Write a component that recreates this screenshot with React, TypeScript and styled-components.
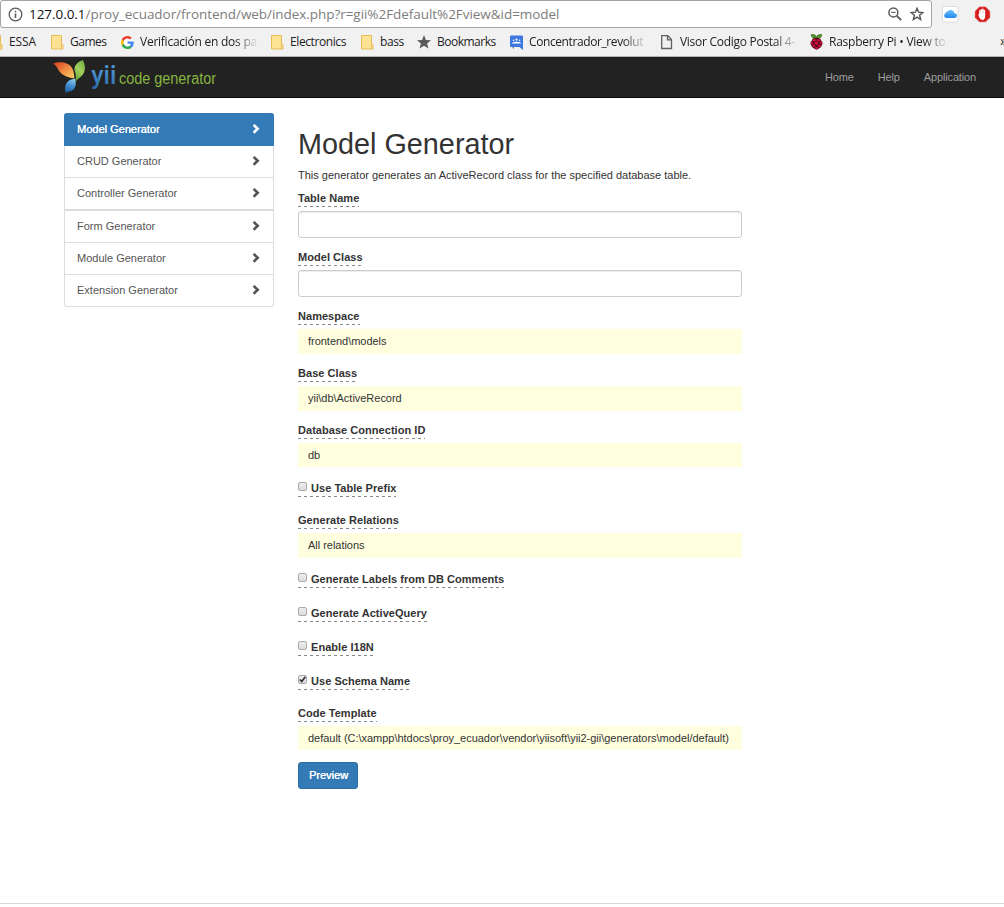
import React from 'react';
import styled, { createGlobalStyle, css } from 'styled-components';

const GlobalStyle = createGlobalStyle`
  * { box-sizing: border-box; }
  body { margin: 0; background: #fff; overflow: hidden; }
  h1, p { margin: 0; font-weight: normal; }
`;

const Page = styled.div`
  width: 1004px;
  height: 907px;
  display: flex;
  flex-direction: column;
  overflow: hidden;
  font: 11px/15px "Liberation Sans", Arial, sans-serif;
  color: #333;
`;

/* Browser chrome */
const Browser = styled.div`
  height: 57px;
  flex: none;
  background: #f2f1f2;
  border-bottom: 1px solid #b6b4b6;
  font-family: "Open Sans", "Noto Sans", sans-serif;
`;
const AddressRow = styled.div`
  display: flex;
  height: 28px;
`;
const AddressBar = styled.div`
  width: 932px;
  height: 28px;
  display: flex;
  align-items: center;
  padding: 0 7px;
  background: #fff;
  border: 1px solid #a6a5a6;
  border-radius: 3px;
`;
const Url = styled.div`
  flex: 1;
  margin-left: 6px;
  font-size: 13.5px;
  line-height: 20px;
  letter-spacing: -0.05px;
  color: #7d7d7d;
  white-space: nowrap;
`;
const Host = styled.span`
  color: #111;
`;
const BarIcons = styled.div`
  display: flex;
  align-items: center;
  gap: 8px;
`;
const Extensions = styled.div`
  display: flex;
  align-items: center;
  gap: 15px;
  padding-left: 10px;
`;
const Bookmarks = styled.div`
  display: flex;
  align-items: center;
  height: 28px;
  margin-left: -10px;
`;
const BookmarkItem = styled.div<{ $w: number }>`
  flex: none;
  width: ${p => p.$w}px;
  display: flex;
  align-items: center;
  gap: 6px;
  svg { flex: none; }
`;
const BookmarkText = styled.div<{ $fade?: boolean; $ls?: number }>`
  font-size: 12px;
  line-height: 18px;
  color: #222;
  white-space: nowrap;
  letter-spacing: ${p => p.$ls ?? -0.25}px;
  ${p => p.$fade && css`
    width: 119px;
    mask-image: linear-gradient(to right, #000 94px, rgba(0, 0, 0, 0.08) 117px);
  `}
`;
const More = styled.div`
  margin: -3px 0 0 0;
  font-size: 14px;
  line-height: 18px;
  color: #333;
`;

/* Site header */
const Navbar = styled.nav`
  flex: none;
  height: 41px;
  display: flex;
  justify-content: space-between;
  background: #222;
  border-bottom: 1px solid #080808;
  padding: 0 28px 0 50px;
`;
const NavLinks = styled.div`
  display: flex;
  gap: 24px;
  padding-top: 13px;
`;
const NavLink = styled.span`
  color: #9d9d9d;
  letter-spacing: -0.15px;
`;

/* Body */
const Main = styled.div`
  height: 806px;
  display: flex;
  gap: 24px;
  padding: 15px 0 0 64px;
  border-bottom: 1px solid #d9d9d9;
`;
const Sidebar = styled.div`
  width: 210px;
`;
const SideItem = styled.div<{ $active?: boolean; $thick?: boolean }>`
  display: flex;
  align-items: center;
  justify-content: space-between;
  height: ${p => (p.$active || p.$thick ? 33 : 32)}px;
  padding: 0 13px 0 12px;
  border: 1px solid #ddd;
  border-top: 0;
  border-bottom-width: ${p => (p.$thick ? 2 : 1)}px;
  color: #555;
  svg { margin-top: -1px; }
  &:last-child { border-radius: 0 0 3px 3px; }
  ${p => p.$active && css`
    background: #337ab7;
    border-color: #337ab7;
    color: #fff;
    border-radius: 3px 3px 0 0;
    text-shadow: 0.3px 0 #fff;
  `}
`;
const Content = styled.div`
  width: 444px;
`;
const Title = styled.h1`
  margin-top: 15px;
  font-size: 28.8px;
  line-height: 32px;
`;
const Intro = styled.p`
  margin: 7px 0 8px;
  line-height: 16px;
  white-space: nowrap;
`;
const Field = styled.div<{ $gap: number }>`
  display: flex;
  flex-direction: column;
  align-items: flex-start;
  gap: 4px;
  margin-bottom: ${p => p.$gap}px;
`;
const Label = styled.label`
  height: 16px;
  display: flex;
  font-weight: bold;
  letter-spacing: 0.04px;
  white-space: nowrap;
  background: repeating-linear-gradient(to right, #888 0 3px, transparent 3px 6px) 0 15px / 100% 1px no-repeat;
`;
const Input = styled.input`
  width: 100%;
  height: 27px;
  border: 1px solid #ccc;
  border-radius: 3px;
  box-shadow: inset 0 1px 1px rgba(0, 0, 0, 0.075);
  outline: none;
`;
const Sticky = styled.div<{ $h?: number }>`
  width: 100%;
  height: ${p => p.$h ?? 25}px;
  padding: 5px 10px;
  background: #ffffe0;
  letter-spacing: -0.025px;
  white-space: nowrap;
`;
const Check = styled.span`
  width: 9px;
  height: 9px;
  margin: 1px 4px 0 0;
  border: 1px solid #aaa;
  border-radius: 2px;
  background: linear-gradient(#ededed, #dcdcdc);
  display: flex;
  svg { overflow: visible; }
`;
const PreviewButton = styled.button`
  display: block;
  width: 60px;
  height: 27px;
  padding: 0 0 1px 1px;
  border: 1px solid #2e6da4;
  border-radius: 3px;
  background: #337ab7;
  color: #fff;
  font: 11px "Liberation Sans", Arial, sans-serif;
  text-shadow: 0.3px 0 #fff;
`;

const InfoIcon = () => (
  <svg width="15" height="15" viewBox="0 0 15 15">
    <circle cx="7.5" cy="7.5" r="6.3" fill="none" stroke="#5a5a5a" strokeWidth="1.3" />
    <path d="M7.5 6.5V11M7.5 3.7V5.2" stroke="#5a5a5a" strokeWidth="1.6" />
  </svg>
);
const ZoomOutIcon = () => (
  <svg width="14" height="14" viewBox="0 0 14 14" fill="none" stroke="#5a5a5a" strokeWidth="1.5">
    <circle cx="5.4" cy="5.4" r="4.5" />
    <path d="M8.8 8.8L13.2 13.2" strokeWidth="1.9" />
    <path d="M3.2 5.4H7.6" strokeWidth="1.1" />
  </svg>
);
const StarOutline = () => (
  <svg width="14" height="14" viewBox="0 0 14 14">
    <path d="M7 1.3L8.6 5.2L12.9 5.5L9.6 8.2L10.7 12.5L7 10.1L3.3 12.5L4.4 8.2L1.1 5.5L5.4 5.2Z" fill="none" stroke="#555" strokeWidth="1.4" />
  </svg>
);
const CloudIcon = () => (
  <svg width="17" height="17" viewBox="0 0 17 17">
    <defs>
      <linearGradient id="cloud" x1="0" y1="0" x2="0" y2="1">
        <stop offset="0" stopColor="#6ec3fa" />
        <stop offset="1" stopColor="#2386ee" />
      </linearGradient>
    </defs>
    <rect x="0.5" y="0.5" width="15.5" height="15.5" rx="2" fill="#fff" stroke="#dcdcdc" />
    <path d="M4.3 12A2.6 2.6 0 0 1 3.4 7.2A2.1 2.1 0 0 1 5.5 5.4A3.8 3.8 0 0 1 12.4 7.2A2.4 2.4 0 0 1 12.7 12Z" fill="url(#cloud)" />
  </svg>
);
const BlockIcon = () => (
  <svg width="17" height="17" viewBox="0 0 17 17">
    <path d="M5.4 0.8H11.6L16 5.2V11.6L11.6 16H5.4L1 11.6V5.2Z" fill="#d6201f" stroke="#e98d8b" strokeWidth="0.6" />
    <path d="M5.900 8.500V4.700M7.400 8V3.600M8.900 8V3.200M10.400 9V4.400" stroke="#fff" strokeWidth="1.400" strokeLinecap="round" />
    <path d="M4.200 8.600Q4.800 8 5.300 8.800L5.500 7.200H11.100V10.800Q10.900 13.800 8.500 14Q6.300 13.700 5.300 11.400Z" fill="#fff" />
  </svg>
);
const FolderIcon = () => (
  <svg width="13" height="15" viewBox="0 0 13 15">
    <path d="M0.5 0.5H10.5V9.5H12V14H0.5Z" fill="#fde293" stroke="#e6bd58" />
    <path d="M10.3 9.5V14" stroke="#eac66a" />
  </svg>
);
const GoogleIcon = () => (
  <svg width="13" height="13" viewBox="0 0 48 48">
    <circle cx="24" cy="24" r="24" fill="#fff" />
    <path fill="#EA4335" d="M24 9.5c3.5 0 6.700 1.200 9.200 3.600l6.900-6.900C35.900 2.400 30.500 0 24 0 14.600 0 6.500 5.400 2.600 13.200l8 6.200C12.400 13.700 17.700 9.500 24 9.500z" />
    <path fill="#4285F4" d="M47 24.600c0-1.600-.2-3.100-.4-4.600H24v9h12.900c-.6 3-2.300 5.500-4.800 7.200l7.700 6C44.400 38 47 31.800 47 24.600z" />
    <path fill="#FBBC05" d="M10.500 28.600c-.5-1.500-.8-3-.8-4.600s.3-3.100.8-4.600l-8-6.200C.9 16.500 0 20.100 0 24s.9 7.500 2.600 10.800z" />
    <path fill="#34A853" d="M24 48c6.500 0 11.900-2.100 15.900-5.800l-7.700-6c-2.200 1.400-4.900 2.300-8.200 2.300-6.300 0-11.600-4.200-13.500-9.900l-8 6.200C6.500 42.600 14.600 48 24 48z" />
  </svg>
);
const StarIcon = () => (
  <svg width="14" height="14" viewBox="0 0 14 14">
    <path d="M7 0L8.9 4.900L14 5.200L10.100 8.500L11.400 13.600L7 10.800L2.600 13.600L3.900 8.500L0 5.200L5.100 4.900Z" fill="#5a5a5a" />
  </svg>
);
const GroupIcon = () => (
  <svg width="13" height="15" viewBox="0 0 13 15">
    <path d="M1 0.500H12Q13 0.500 13 1.500V15L9.500 12H1Q0 12 0 11V1.500Q0 0.500 1 0.500Z" fill="#3d78e0" />
    <path d="M2 12L4 14.500V12Z" fill="#8a8f99" />
    <g fill="#fff">
      <circle cx="6.500" cy="4.500" r="1.100" />
      <circle cx="3.500" cy="5.300" r="0.800" />
      <circle cx="9.500" cy="5.300" r="0.800" />
      <path d="M2 8.600Q2.200 6.900 3.700 6.900Q4.300 6.900 4.600 7.200Q5.300 6.500 6.500 6.500T8.400 7.200Q8.700 6.900 9.300 6.900Q10.800 6.900 11 8.600Z" />
    </g>
  </svg>
);
const FileIcon = () => (
  <svg width="13" height="15" viewBox="0 0 13 15" fill="none" stroke="#606060" strokeWidth="1.300">
    <path d="M0.700 0.700H6.800L10.500 4.500V13.500H0.700Z" />
    <path d="M6.500 0.700V4.800H10.500" />
  </svg>
);
const RaspberryIcon = () => (
  <svg width="13" height="16" viewBox="0 0 13 16">
    <path d="M6.500 4.600Q1.500 5 1.200 0.600Q5.500 -0.300 6.500 3.300Q7.500 -0.300 11.800 0.600Q11.500 5 6.500 4.600Z" fill="#4f9a24" stroke="#25400f" strokeWidth="0.500" />
    <path d="M6.500 3.800Q10.500 3.500 11.300 6.800Q13.300 8.500 12 11Q11 14 6.500 15.800Q2 14 1 11Q-0.300 8.500 1.700 6.800Q2.500 3.500 6.500 3.800Z" fill="#5a0519" />
    <g fill="#c9113f">
      <ellipse cx="6.500" cy="9.300" rx="1.900" ry="1.700" />
      <ellipse cx="4.400" cy="6.200" rx="1.800" ry="1.300" />
      <ellipse cx="8.600" cy="6.200" rx="1.800" ry="1.300" />
      <ellipse cx="2" cy="9.100" rx="1.100" ry="1.500" />
      <ellipse cx="11" cy="9.100" rx="1.100" ry="1.500" />
      <ellipse cx="3.700" cy="12" rx="1.500" ry="1.300" />
      <ellipse cx="9.300" cy="12" rx="1.500" ry="1.300" />
      <ellipse cx="6.500" cy="14" rx="1.700" ry="1" />
    </g>
  </svg>
);
const Chevron = () => (
  <svg width="8" height="10" viewBox="0 0 8 10">
    <path d="M1.600 0.900L5.700 4.800L1.600 8.700" fill="none" stroke="currentColor" strokeWidth="2.600" />
  </svg>
);
const Logo = () => (
  <svg width="170" height="40" viewBox="50 57 170 40">
    <defs>
      <linearGradient id="petalRed" x1="0" y1="0" x2="1" y2="1">
        <stop offset="0" stopColor="#d93d1e" />
        <stop offset="0.500" stopColor="#ee8a45" />
        <stop offset="1" stopColor="#fbd465" />
      </linearGradient>
      <linearGradient id="petalGreen" x1="0.800" y1="0" x2="0.300" y2="1">
        <stop offset="0" stopColor="#6fae45" />
        <stop offset="0.500" stopColor="#a3cf5c" />
        <stop offset="1" stopColor="#6aa93c" />
      </linearGradient>
      <linearGradient id="petalBlue" x1="0.600" y1="0" x2="0.400" y2="1">
        <stop offset="0" stopColor="#8ecbee" />
        <stop offset="0.500" stopColor="#3f8fd0" />
        <stop offset="1" stopColor="#1a5ca4" />
      </linearGradient>
      <linearGradient id="yii" x1="0" y1="0" x2="0" y2="1">
        <stop offset="0" stopColor="#5aa4dc" />
        <stop offset="1" stopColor="#2a69ad" />
      </linearGradient>
    </defs>
    <path d="M53.300 63.500C58 61.500 68 61.500 71.800 67.500C73.600 70.500 74.300 74 74.300 78.500C69 77.500 63 76 60 72C57.500 69 57 66 53.300 63.500Z" fill="url(#petalRed)" />
    <path d="M82.700 60C85.800 65.500 85.800 71.500 82 75.500C80 77.700 77.500 79 75.600 81.500C76.200 78 76 74 74.400 69.500C74.600 65 78 61.500 82.700 60Z" fill="url(#petalGreen)" />
    <path d="M75.200 78.500C76 82 76.300 86 74 89C72 91.500 68.500 91 65.700 93C64.300 88.500 65 84.500 67.800 81.500C70 79.200 73 79.500 75.200 78.500Z" fill="url(#petalBlue)" />
    <text x="91.300" y="84.300" textLength="25" lengthAdjust="spacingAndGlyphs" fontFamily="Roboto, sans-serif" fontWeight="500" fontSize="26" fill="url(#yii)">yii</text>
    <text x="119" y="83.500" textLength="97" lengthAdjust="spacingAndGlyphs" fontFamily="Liberation Sans, Arial, sans-serif" fontSize="16" fill="#86b440">code generator</text>
  </svg>
);

const CheckBox = ({ checked }: { checked?: boolean }) => (
  <Check>
    {checked && (
      <svg width="7" height="7" viewBox="0 0 7 7">
        <path d="M0.800 3.500L2.800 5.500L6.300 0.800" fill="none" stroke="#333" strokeWidth="1.700" />
      </svg>
    )}
  </Check>
);

const bookmarks = [
  { icon: <FolderIcon />, text: 'ESSA', w: 61, ls: -0.1 },
  { icon: <FolderIcon />, text: 'Games', w: 70, ls: -0.5 },
  { icon: <GoogleIcon />, text: 'Verificación en dos pa', w: 150, fade: true },
  { icon: <FolderIcon />, text: 'Electronics', w: 90, ls: -0.4 },
  { icon: <FolderIcon />, text: 'bass', w: 56, ls: -0.4 },
  { icon: <StarIcon />, text: 'Bookmarks', w: 93, ls: -0.5 },
  { icon: <GroupIcon />, text: 'Concentrador_revolut', w: 151, fade: true, ls: -0.4 },
  { icon: <FileIcon />, text: 'Visor Codigo Postal 4-', w: 149, fade: true, ls: -0.28 },
  { icon: <RaspberryIcon />, text: 'Raspberry Pi • View to', w: 190, fade: true },
];

const generators = ['Model Generator', 'CRUD Generator', 'Controller Generator', 'Form Generator', 'Module Generator', 'Extension Generator'];

type FieldDef = { label: string; gap: number; kind: 'input' | 'sticky' | 'check'; value?: string; h?: number; checked?: boolean };
const fields: FieldDef[] = [
  { label: 'Table Name', gap: 12, kind: 'input' },
  { label: 'Model Class', gap: 12, kind: 'input' },
  { label: 'Namespace', gap: 12, kind: 'sticky', value: 'frontend\\models' },
  { label: 'Base Class', gap: 12, kind: 'sticky', value: 'yii\\db\\ActiveRecord' },
  { label: 'Database Connection ID', gap: 14, kind: 'sticky', value: 'db', h: 24 },
  { label: 'Use Table Prefix', gap: 16, kind: 'check' },
  { label: 'Generate Relations', gap: 14, kind: 'sticky', value: 'All relations' },
  { label: 'Generate Labels from DB Comments', gap: 18, kind: 'check' },
  { label: 'Generate ActiveQuery', gap: 18, kind: 'check' },
  { label: 'Enable I18N', gap: 18, kind: 'check' },
  { label: 'Use Schema Name', gap: 16, kind: 'check', checked: true },
  { label: 'Code Template', gap: 12, kind: 'sticky', value: 'default (C:\\xampp\\htdocs\\proy_ecuador\\vendor\\yiisoft\\yii2-gii\\generators\\model/default)', h: 24 },
];

export default function App() {
  return (
    <Page>
      <GlobalStyle />
      <Browser>
        <AddressRow>
          <AddressBar>
            <InfoIcon />
            <Url><Host>127.0.0.1</Host>/proy_ecuador/frontend/web/index.php?r=gii%2Fdefault%2Fview&amp;id=model</Url>
            <BarIcons><ZoomOutIcon /><StarOutline /></BarIcons>
          </AddressBar>
          <Extensions><CloudIcon /><BlockIcon /></Extensions>
        </AddressRow>
        <Bookmarks>
          {bookmarks.map(b => (
            <BookmarkItem key={b.text} $w={b.w}>
              {b.icon}
              <BookmarkText $fade={b.fade} $ls={b.ls}>{b.text}</BookmarkText>
            </BookmarkItem>
          ))}
          <More>»</More>
        </Bookmarks>
      </Browser>
      <Navbar>
        <Logo />
        <NavLinks>
          <NavLink>Home</NavLink>
          <NavLink>Help</NavLink>
          <NavLink>Application</NavLink>
        </NavLinks>
      </Navbar>
      <Main>
        <Sidebar>
          {generators.map((g, i) => (
            <SideItem key={g} $active={i === 0} $thick={i === 2}>{g}<Chevron /></SideItem>
          ))}
        </Sidebar>
        <Content>
          <Title>Model Generator</Title>
          <Intro>This generator generates an ActiveRecord class for the specified database table.</Intro>
          {fields.map(f => (
            <Field key={f.label} $gap={f.gap}>
              <Label>{f.kind === 'check' && <CheckBox checked={f.checked} />}{f.label}</Label>
              {f.kind === 'input' && <Input />}
              {f.kind === 'sticky' && <Sticky $h={f.h}>{f.value}</Sticky>}
            </Field>
          ))}
          <PreviewButton>Preview</PreviewButton>
        </Content>
      </Main>
    </Page>
  );
}
